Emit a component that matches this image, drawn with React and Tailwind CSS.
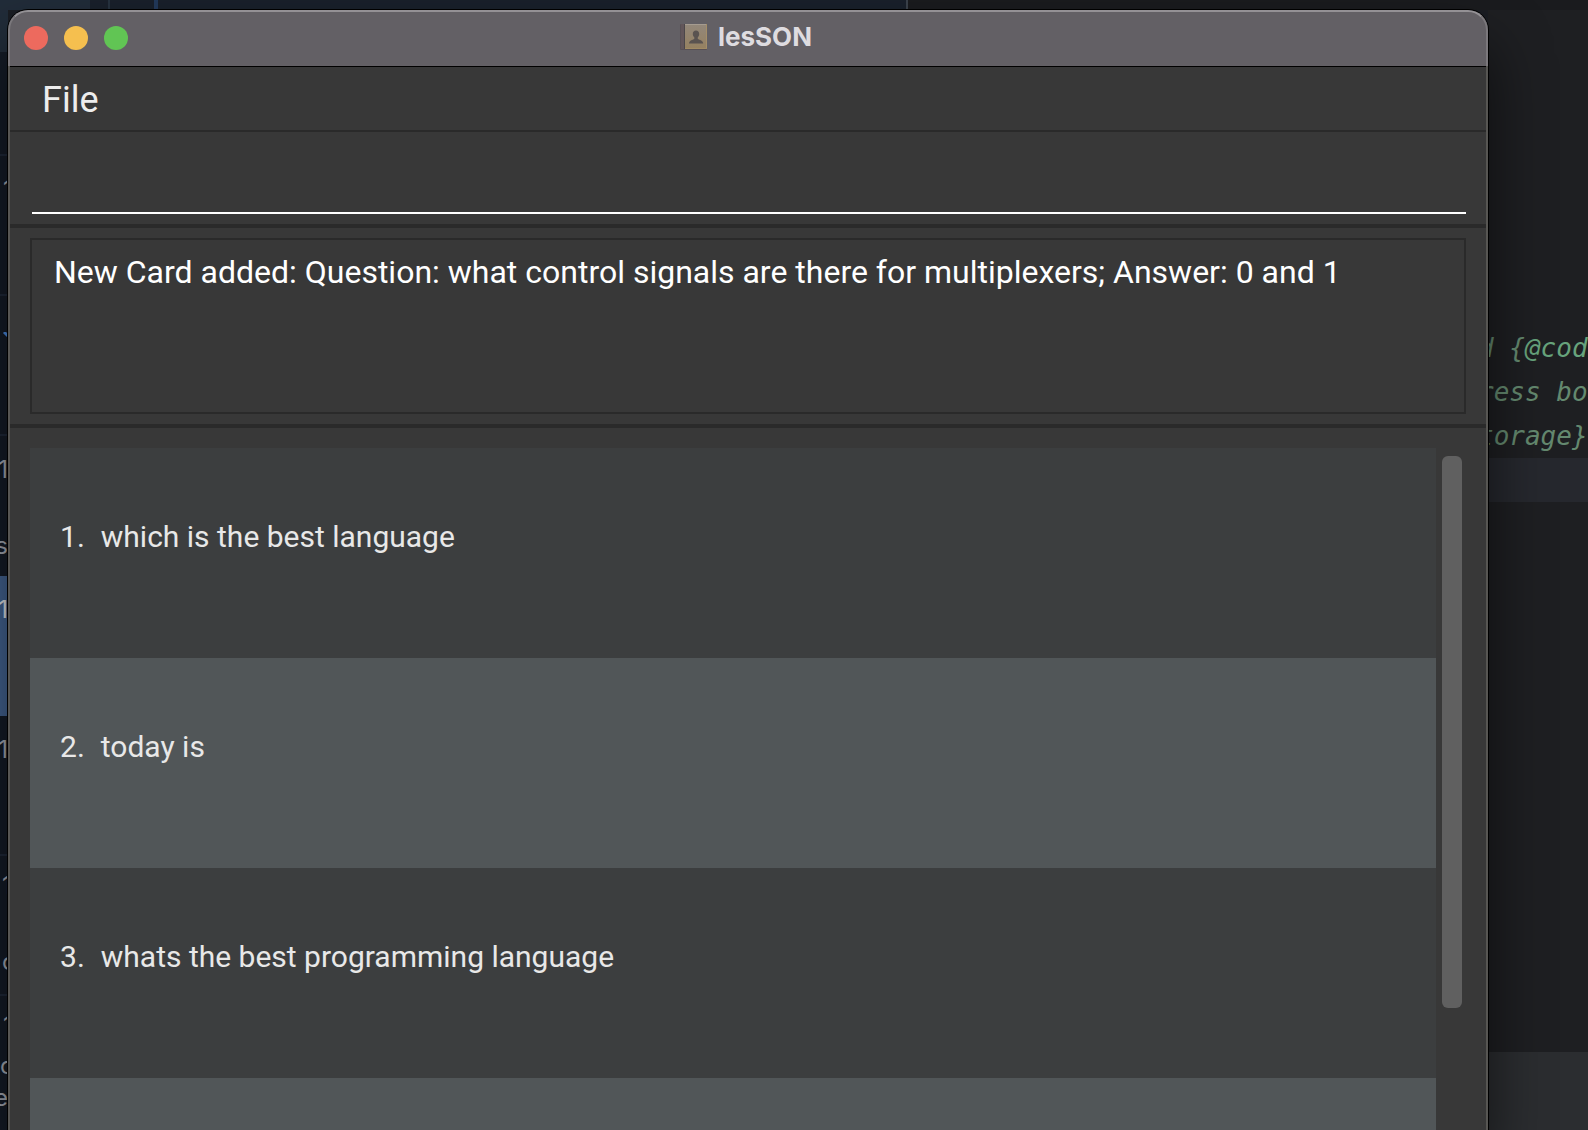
import React from "react";

const cards = [
  "which is the best language",
  "today is",
  "whats the best programming language",
  "",
];

function BookIcon() {
  return (
    <svg width="28" height="28" viewBox="0 0 28 28" aria-hidden="true">
      <defs>
        <linearGradient id="cover" x1="0" y1="0" x2="0" y2="1">
          <stop offset="0" stopColor="#92877b" />
          <stop offset="1" stopColor="#968160" />
        </linearGradient>
      </defs>
      <rect x="0" y="1" width="27" height="26" rx="1" fill="#585055" />
      <rect x="1" y="1" width="4" height="25" fill="#62565a" />
      <rect x="4" y="1" width="1" height="25" fill="#4c474a" />
      <rect x="5" y="1" width="22" height="25" fill="url(#cover)" />
      <rect x="5" y="1" width="22" height="1" fill="#a59b90" />
      <rect x="26" y="1" width="1" height="25" fill="#a48e69" />
      <rect x="5" y="25" width="22" height="1" fill="#a08a63" />
      <path
        d="M16 7.5c2 0 3.2 1.4 3.2 3.4 0 1.6-.7 2.7-1.4 3.4v1.6c1.8 1 5.4 1.3 5.400 4.600H9c0-3.300 3.500-3.600 5.300-4.600v-1.600c-.7-.7-1.500-1.800-1.500-3.400 0-2 1.200-3.400 3.200-3.400z"
        fill="#5a5350"
      />
    </svg>
  );
}

function TitleBar() {
  return (
    <header className="grid h-14 grid-cols-[1fr_auto_1fr] items-center rounded-t-[20px] border-x-2 border-t-2 border-x-[#7b787c] border-t-[#949195] bg-[#636065] pr-1 pb-0.5">
      <div className="flex gap-4 pl-3.5">
        <button aria-label="Close" className="size-6 rounded-full bg-[#ed6a5e]" />
        <button aria-label="Minimize" className="size-6 rounded-full bg-[#f5bf4f]" />
        <button aria-label="Zoom" className="size-6 rounded-full bg-[#61c554]" />
      </div>
      <div className="flex items-center gap-2.5 pb-0.5">
        <BookIcon />
        <h1 className="font-['Inter',sans-serif] text-[26px] leading-8 font-bold text-[#dedce0]">
          lesSON
        </h1>
      </div>
    </header>
  );
}

function CardList() {
  return (
    <section className="flex min-h-0 flex-1 pt-5 pl-5">
      <ol id="cards" className="min-w-0 flex-1 overflow-hidden">
        {cards.map((text, i) => (
          <li
            key={i}
            className="h-[210px] px-[30px] pt-[69px] text-[30px] leading-10 text-[#e8e8e8] odd:bg-[#3c3e3f] even:bg-[#515658]"
          >
            {text && (
              <div className="flex gap-4">
                <span>{i + 1}.</span>
                <span>{text}</span>
              </div>
            )}
          </li>
        ))}
      </ol>
      <div className="w-[50px] pt-2 pl-1.5">
        <div
          role="scrollbar"
          aria-label="Card list"
          aria-controls="cards"
          aria-valuenow={0}
          className="h-[552px] w-5 rounded-md bg-[#606060]"
        />
      </div>
    </section>
  );
}

function LessonWindow() {
  return (
    <main className="relative z-10 flex min-w-0 flex-1 flex-col rounded-t-[20px] font-['Roboto',sans-serif] shadow-[0_0_0_1px_#000,0_36px_60px_rgba(0,0,0,0.6)]">
      <TitleBar />
      <div className="flex min-h-0 flex-1 flex-col border-x-2 border-x-[#575653] bg-[#383838]">
        <nav className="border-t border-b-2 border-t-black border-b-[#2a2a2a] px-8 pt-3 pb-2">
          <button className="text-[36px] leading-[43px] text-[#ededed]">File</button>
        </nav>
        <form className="border-b-4 border-[#2a2a2a] pt-5 pr-5 pb-2.5 pl-[22px]">
          <input
            aria-label="Command"
            className="block h-[62px] w-full border-b-2 border-white bg-transparent text-[32px] text-white outline-none"
          />
        </form>
        <section className="border-b-4 border-[#2a2a2a] px-5 py-2.5">
          <textarea
            readOnly
            aria-label="Result"
            className="block h-44 w-full resize-none overflow-hidden border-2 border-[#2a2a2a] bg-transparent px-[22px] py-3 text-[32px] leading-10 text-white outline-none"
            value="New Card added: Question: what control signals are there for multiplexers; Answer: 0 and 1"
          />
        </section>
        <CardList />
      </div>
    </main>
  );
}

function BackdropSidebar() {
  return (
    <aside className="flex w-2 flex-col overflow-hidden bg-[#151c27] font-['Inter',sans-serif] text-2xl leading-7 text-[#a6abb5]">
      <div className="h-[42px] shrink-0 bg-[#212c39]" />
      <div className="h-[102px] shrink-0" />
      <div className="h-[140px] shrink-0 border-t-2 border-[#1f2939] pt-5 pl-[3px]">1</div>
      <div className="h-[140px] shrink-0 border-t-2 border-[#1f2939] pt-9">
        <svg width="8" height="6" viewBox="0 0 8 6" aria-hidden="true">
          <path d="M4 0l4 4" stroke="#4a8ade" strokeWidth="3" />
        </svg>
      </div>
      <div className="flex h-[142px] shrink-0 flex-col items-end border-t-2 border-[#1f2939] pt-5">
        <span>1</span>
        <span className="pt-12">s</span>
      </div>
      <div className="flex h-[140px] shrink-0 flex-col items-end bg-[#446492] pt-5 text-[#e0e2e6]">1</div>
      <div className="flex h-[138px] shrink-0 flex-col items-end pt-5">1</div>
      <div className="flex h-[140px] shrink-0 flex-col border-t-2 border-[#1f2939] pt-4 pl-0.5">
        <span>1</span>
        <span className="pt-12">c</span>
      </div>
      <div className="flex h-[140px] shrink-0 flex-col border-t-2 border-[#1f2939] pt-4">
        <span className="pl-[3px]">1</span>
        <span className="pt-2.5 leading-8">c</span>
        <span className="self-end leading-8">e</span>
      </div>
    </aside>
  );
}

function BackdropEditor() {
  return (
    <aside className="flex w-[100px] flex-col overflow-hidden bg-[#1e1f22] pt-[316px] font-['DejaVu_Sans_Mono',monospace] text-[26px] leading-[44px] whitespace-pre text-[#64896f] italic">
      <div className="-ml-2.5">
        <p>
          d {"{"}
          <span className="text-[#67a37c]">@cod</span>
        </p>
        <p>ress bo</p>
        <p>torage{"}"}</p>
      </div>
      <div className="h-11 shrink-0 bg-[#26282e]" />
      <div className="h-[550px] shrink-0" />
      <div className="flex-1 bg-[#2b2d30]" />
    </aside>
  );
}

export default function App() {
  return (
    <div className="flex h-screen flex-col overflow-hidden bg-[#1a1d23]">
      <div className="flex h-2.5 shrink-0">
        <div className="w-[90px] bg-[#212c39]" />
        <div className="w-[18px] bg-[#19202b]" />
        <div className="w-0.5 bg-[#26323f]" />
        <div className="w-11 bg-[#19202b]" />
        <div className="w-1 bg-[#22395a]" />
        <div className="w-[748px] bg-[#19202b]" />
        <div className="w-0.5 bg-[#3b424b]" />
        <div className="flex-1 bg-[#1a1b1e]" />
      </div>
      <div className="flex min-h-0 flex-1">
        <BackdropSidebar />
        <LessonWindow />
        <BackdropEditor />
      </div>
    </div>
  );
}
